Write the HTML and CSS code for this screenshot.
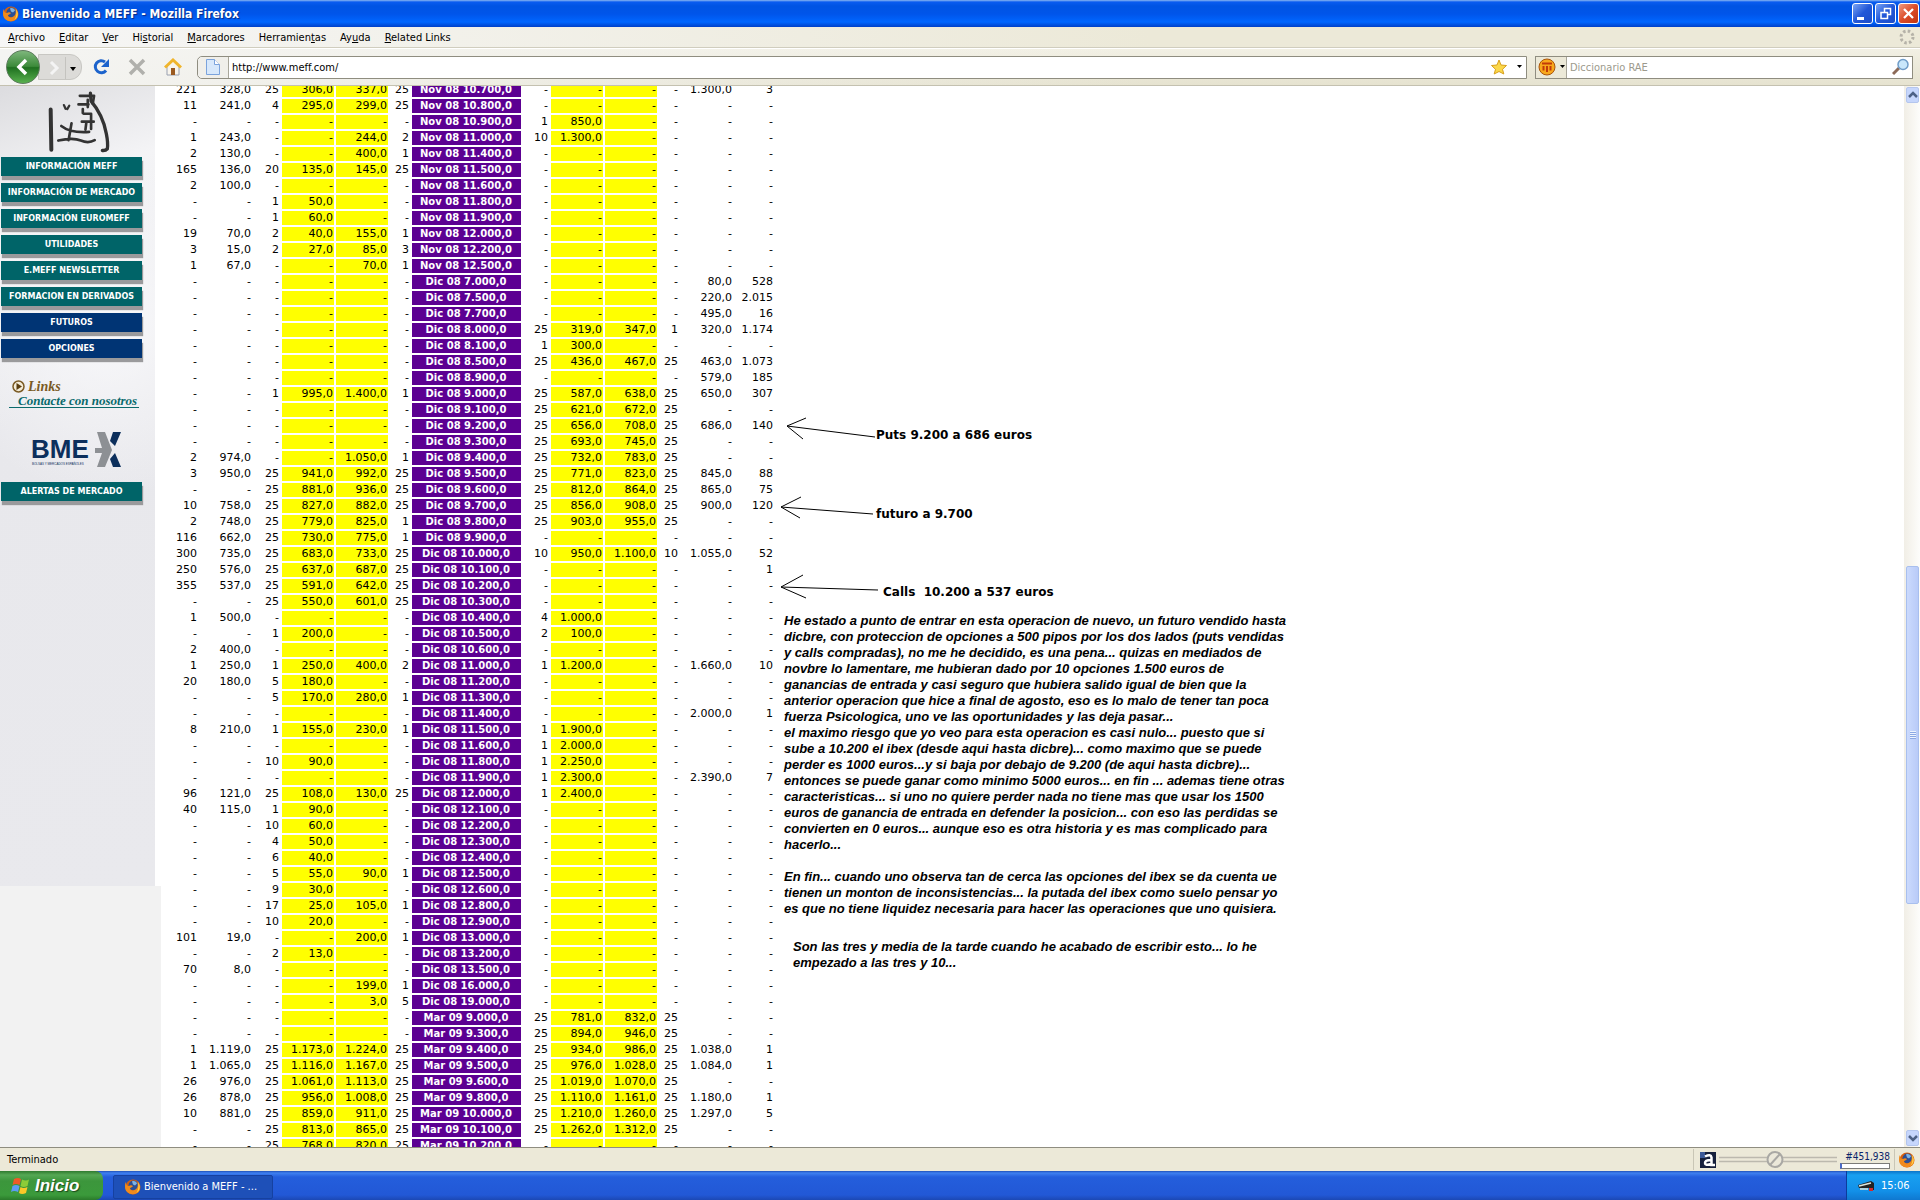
FILE: index.html
```html
<!DOCTYPE html>
<html lang="es">
<head>
    <meta charset="utf-8">
    <meta name="viewport" content="width=device-width, initial-scale=1.0">
    <title>Bienvenido a MEFF</title>
    <link rel="stylesheet" href="styles.css">
</head>
<body>
    <!-- shared icons -->
    <svg class="defs" width="0" height="0">
        <symbol id="firefox" viewBox="0 0 16 16">
            <circle cx="8" cy="8" r="7.500" fill="#d9600c"/>
            <circle cx="8.500" cy="6.500" r="5" fill="#2a4f96"/>
            <path d="M7 2.500c2-1 4.500 0 5 2l-2 2-2-1z" fill="#7fb4e4"/>
            <path d="M1 3c0 3 1 4 3 4 1-1 3-1 4 0-1 2-3 1-3 3 1 2 5 2 7-1 1-2 1-4 0-6 4 3 4 9 0 11-5 3-12 0-12-6 0-2 0-4 1-5z" fill="#f08a1c"/>
            <path d="M13 3c3 4 2 9-2 11 2-2 3-6 2-11z" fill="#ffd24a"/>
        </symbol>
    </svg>

    <div class="titlebar">
        <svg class="ico" width="16" height="16"><use href="#firefox"/></svg>
        <span class="title">Bienvenido a MEFF - Mozilla Firefox</span>
        <div class="window-buttons">
            <button class="win" aria-label="Minimizar"><svg width="20" height="20"><path d="M4 13h7v3H4z" fill="#fff"/></svg></button>
            <button class="win" aria-label="Restaurar"><svg width="20" height="20"><path d="M8.500 8V4.500h6v6H12M5 8.500h6.500v6H5z" fill="none" stroke="#fff" stroke-width="1.500"/></svg></button>
            <button class="win close" aria-label="Cerrar"><svg width="20" height="20"><path d="M5 5l9 9M14 5l-9 9" stroke="#fff" stroke-width="2.300"/></svg></button>
        </div>
    </div>

    <div class="menubar">
        <a href="#"><u>A</u>rchivo</a>
        <a href="#"><u>E</u>ditar</a>
        <a href="#"><u>V</u>er</a>
        <a href="#">Hi<u>s</u>torial</a>
        <a href="#"><u>M</u>arcadores</a>
        <a href="#">Herramien<u>t</u>as</a>
        <a href="#">Ay<u>u</u>da</a>
        <a href="#"><u>R</u>elated Links</a>
        <svg class="throbber" width="16" height="16"><circle cx="8" cy="8" r="6" fill="none" stroke="#b5b2a8" stroke-width="3" stroke-dasharray="2.500 2.210"/></svg>
    </div>

    <div class="toolbar">
        <div class="nav">
            <button class="back" aria-label="Atrás"><svg width="32" height="32"><path d="M19 9l-7 7 7 7" fill="none" stroke="#fff" stroke-width="3.500"/></svg></button>
            <button class="forward" aria-label="Adelante"><svg width="42" height="26"><path d="M12 7l6 6-6 6" fill="none" stroke="#f4f4f4" stroke-width="3"/><path d="M26.500 2v22" stroke="#c4c3bf"/><path d="M31 12h6l-3 4z" fill="#000"/></svg></button>
        </div>
        <button class="tool" aria-label="Recargar"><svg width="18" height="18"><path d="M14 12.500A6 6 0 1 1 13 4" fill="none" stroke="#1c63cc" stroke-width="3"/><path d="M17 1v8H9z" fill="#1c63cc"/></svg></button>
        <button class="tool" aria-label="Detener"><svg width="18" height="18"><path d="M2 2l14 14M16 2L2 16" stroke="#b0b0ac" stroke-width="3.500"/></svg></button>
        <button class="tool" aria-label="Inicio"><svg width="18" height="18"><path d="M3 8v9h12V8L9 3z" fill="#f8f4ec" stroke="#98a0b0"/><path d="M7 10h4v7H7z" fill="#9a5a20"/><path d="M1 9.500L9 2l8 7.500" fill="none" stroke="#f0b52c" stroke-width="3"/></svg></button>
        <div class="urlbox">
            <span class="identity"><svg width="14" height="18"><path d="M.5 1.500h8l5 5v10H.5z" fill="#d7e8fb" stroke="#7ba3dc"/><path d="M8.500 1.500v5h5" fill="#fff" stroke="#7ba3dc"/></svg></span>
            <input type="text" aria-label="Dirección" value="http://www.meff.com/">
            <svg width="16" height="16"><path d="M8 1l2 5 5.500.5-4 3.800L12.800 15 8 12.500 3.200 15l1.300-4.700-4-3.800L6 6z" fill="#fbd84a" stroke="#d79f1c"/></svg>
            <svg class="caret" width="6" height="4"><path d="M0 0h5L2.500 3z"/></svg>
        </div>
        <div class="searchbox">
            <span class="engine">
                <svg width="18" height="18"><circle cx="9" cy="9" r="8" fill="#f8a81c" stroke="#a8530c"/><path d="M4 5.500h10M5.500 8v4.500M9 8v6M12.500 8v4.500" stroke="#c23a08" stroke-width="2"/></svg>
                <svg width="6" height="4"><path d="M0 0h5L2.500 3z"/></svg>
            </span>
            <input type="text" aria-label="Buscar" placeholder="Diccionario RAE">
            <svg width="18" height="18"><path d="M1 16l6-6" stroke="#8c6a58" stroke-width="3"/><circle cx="11" cy="6.500" r="5" fill="#c9e7fb" stroke="#6f9cc8" stroke-width="1.500"/></svg>
        </div>
    </div>

    <div class="viewport">
        <div class="sidebar">
            <svg class="logo" viewBox="0 15 465 213">
                <g fill="none" stroke="#333" stroke-width="10" stroke-linecap="round" stroke-linejoin="round">
                    <path d="M150 85l2 122" stroke-width="12"/>
                    <path d="M190 72l5 11M200 84l6-10" stroke-width="7"/>
                    <path d="M238 44h43l-4 24" stroke-width="8"/>
                    <path d="M270 36l2 24q36 42 46 98 6 30 3 46-5 6-15 5"/>
                    <path d="M234 70h30M262 56v22M247 84v12M250 98h22v46M244 122h36M258 122l-3 24" stroke-width="8"/>
                    <path d="M182 135q28 22 84 18M213 127l-9 51M173 179q45-10 68 0t42-1" stroke-width="8"/>
                </g>
            </svg>
            <div class="nav-links">
                <a class="btn" href="#">INFORMACIÓN MEFF</a>
                <a class="btn" href="#">INFORMACIÓN DE MERCADO</a>
                <a class="btn" href="#">INFORMACIÓN EUROMEFF</a>
                <a class="btn" href="#">UTILIDADES</a>
                <a class="btn" href="#">E.MEFF NEWSLETTER</a>
                <a class="btn" href="#">FORMACION EN DERIVADOS</a>
                <a class="btn blue" href="#">FUTUROS</a>
                <a class="btn blue" href="#">OPCIONES</a>
            </div>
            <div class="contact">
                <a class="links" href="#"><svg width="13" height="13"><circle cx="6.500" cy="6.500" r="5.500" fill="#f4ecd8" stroke="#7a5a24" stroke-width="1.500"/><path d="M4.500 3v7l5.500-3.500z" fill="#5a3e10"/></svg>Links</a>
                <a class="nosotros" href="#">Contacte con nosotros</a>
            </div>
            <svg class="bme" viewBox="0 0 90 36">
                <text class="brand" x="0" y="26">BME</text>
                <path d="M66 0h8l7 18-7 17h-8l5-14h-7v-5h7z" fill="#8d9094"/>
                <path d="M82 0h8l-6 14-5-5zM84 21l6 14h-8l-3-8z" fill="#0c2f5c"/>
                <text x="1" y="33">BOLSAS Y MERCADOS ESPAÑOLES</text>
            </svg>
            <a class="btn" href="#">ALERTAS DE MERCADO</a>
        </div>
        <div class="sidebar-end"></div>

        <table class="prices">
            <colgroup>
                <col class="w-vol"><col class="w-price"><col class="w-wide"><col class="w-price"><col class="w-price"><col class="w-size">
                <col class="w-name">
                <col class="w-wide"><col class="w-price"><col class="w-price"><col class="w-size"><col class="w-price"><col class="w-last">
            </colgroup>
            <tbody id="rows"></tbody>
        </table>

        <div class="notes">
            <div class="arrow-note first">
                <svg width="96" height="26"><path d="M7 9l88 11M26 1L7 9l16 13"/></svg>
                <strong>Puts 9.200 a 686 euros</strong>
            </div>
            <div class="arrow-note second">
                <svg width="96" height="26"><path d="M1 11l92 7M21 1L1 11l19 11"/></svg>
                <strong>futuro a 9.700</strong>
            </div>
            <div class="arrow-note third">
                <svg width="103" height="26"><path d="M1 13l97 3M23 1L1 13l25 11"/></svg>
                <strong>Calls  10.200 a 537 euros</strong>
            </div>
            <p>He estado a punto de entrar en esta operacion de nuevo, un futuro vendido hasta<br>
            dicbre, con proteccion de opciones a 500 pipos por los dos lados (puts vendidas<br>
            y calls compradas), no me he decidido, es una pena... quizas en mediados de<br>
            novbre lo lamentare, me hubieran dado por 10 opciones 1.500 euros de<br>
            ganancias de entrada y casi seguro que hubiera salido igual de bien que la<br>
            anterior operacion que hice a final de agosto, eso es lo malo de tener tan poca<br>
            fuerza Psicologica, uno ve las oportunidades y las deja pasar...<br>
            el maximo riesgo que yo veo para esta operacion es casi nulo... puesto que si<br>
            sube a 10.200 el ibex (desde aqui hasta dicbre)... como maximo que se puede<br>
            perder es 1000 euros...y si baja por debajo de 9.200 (de aqui hasta dicbre)...<br>
            entonces se puede ganar como minimo 5000 euros... en fin ... ademas tiene otras<br>
            caracteristicas... si uno no quiere perder nada no tiene mas que usar los 1500<br>
            euros de ganancia de entrada en defender la posicion... con eso las perdidas se<br>
            convierten en 0 euros... aunque eso es otra historia y es mas complicado para<br>
            hacerlo...</p>
            <p>En fin... cuando uno observa tan de cerca las opciones del ibex se da cuenta ue<br>
            tienen un monton de inconsistencias... la putada del ibex como suelo pensar yo<br>
            es que no tiene liquidez necesaria para hacer las operaciones que uno quisiera.</p>
            <p class="last">Son las tres y media de la tarde cuando he acabado de escribir esto... lo he<br>
            empezado a las tres y 10...</p>
        </div>

        <div class="scrollbar">
            <button class="up" aria-label="Subir"><svg width="10" height="8"><path d="M1 6l4-4 4 4" fill="none" stroke="#4d6185" stroke-width="2.500"/></svg></button>
            <div class="track before"></div>
            <div class="thumb"><i></i></div>
            <div class="track after"></div>
            <button class="down" aria-label="Bajar"><svg width="10" height="8"><path d="M1 2l4 4 4-4" fill="none" stroke="#4d6185" stroke-width="2.500"/></svg></button>
        </div>
    </div>

    <div class="statusbar">
        <span class="status-text">Terminado</span>
        <div class="panel slider">
            <svg width="16" height="16"><path d="M0 0h16v16H0z" fill="#16203c"/><path d="M0 0h5v6H0z" fill="#3c5a98"/><path d="M5 4.500q6-3 6.500 1V13H15M11 8q-6 0-6 3t6 1" fill="none" stroke="#fff" stroke-width="2.500"/></svg>
            <svg width="122" height="18"><path d="M2 6.500h118M2 10.500h118" stroke="#bcb9ae" stroke-width="1.500"/><circle cx="58" cy="8.500" r="7.500" fill="#ebe8da" stroke="#a9a8a4" stroke-width="2"/><path d="M53 14L63 3" stroke="#a9a8a4" stroke-width="2"/></svg>
            <div class="rank"><a href="#">#451,938</a><div class="meter"></div></div>
        </div>
        <div class="panel"><svg width="16" height="16"><use href="#firefox"/></svg></div>
    </div>

    <div class="taskbar">
        <button class="start">
            <svg width="20" height="20"><path d="M3 3q4-2 7 0L8.500 9Q5 7 1.500 9z" fill="#ee5a28"/><path d="M11 3.500q4 2 7 0L16.500 10q-4 2-7 0z" fill="#8ccc38"/><path d="M1.500 10q3-2 7 0L7 16q-4-2-7 0z" fill="#5c9cf4"/><path d="M9.500 11q3 2 7 0L15 17q-4 2-7 0z" fill="#fbc828"/></svg>
            Inicio
        </button>
        <button class="task"><svg width="16" height="16"><use href="#firefox"/></svg>Bienvenido a MEFF - ...</button>
        <div class="tray">
            <svg width="18" height="12"><path d="M1 5l13-4 3 2v7h-4l-1-2H2z" fill="#222"/><path d="M2 6l12-3M3 9h8" stroke="#dfe6dc" stroke-width="1.500"/><path d="M12 8h4v3h-4z" fill="#d42a2a"/></svg>
            <span>15:06</span>
        </div>
    </div>

    <script>
        // calls | strike | puts, an empty side means no quotes
        var rows = [
            "221 328,0 25 306,0 337,0 25|Nov 08 10.700,0|- - - - 1.300,0 3",
            "11 241,0 4 295,0 299,0 25|Nov 08 10.800,0|",
            "|Nov 08 10.900,0|1 850,0 - - - -",
            "1 243,0 - - 244,0 2|Nov 08 11.000,0|10 1.300,0 - - - -",
            "2 130,0 - - 400,0 1|Nov 08 11.400,0|",
            "165 136,0 20 135,0 145,0 25|Nov 08 11.500,0|",
            "2 100,0 - - - -|Nov 08 11.600,0|",
            "- - 1 50,0 - -|Nov 08 11.800,0|",
            "- - 1 60,0 - -|Nov 08 11.900,0|",
            "19 70,0 2 40,0 155,0 1|Nov 08 12.000,0|",
            "3 15,0 2 27,0 85,0 3|Nov 08 12.200,0|",
            "1 67,0 - - 70,0 1|Nov 08 12.500,0|",
            "|Dic 08 7.000,0|- - - - 80,0 528",
            "|Dic 08 7.500,0|- - - - 220,0 2.015",
            "|Dic 08 7.700,0|- - - - 495,0 16",
            "|Dic 08 8.000,0|25 319,0 347,0 1 320,0 1.174",
            "|Dic 08 8.100,0|1 300,0 - - - -",
            "|Dic 08 8.500,0|25 436,0 467,0 25 463,0 1.073",
            "|Dic 08 8.900,0|- - - - 579,0 185",
            "- - 1 995,0 1.400,0 1|Dic 08 9.000,0|25 587,0 638,0 25 650,0 307",
            "|Dic 08 9.100,0|25 621,0 672,0 25 - -",
            "|Dic 08 9.200,0|25 656,0 708,0 25 686,0 140",
            "|Dic 08 9.300,0|25 693,0 745,0 25 - -",
            "2 974,0 - - 1.050,0 1|Dic 08 9.400,0|25 732,0 783,0 25 - -",
            "3 950,0 25 941,0 992,0 25|Dic 08 9.500,0|25 771,0 823,0 25 845,0 88",
            "- - 25 881,0 936,0 25|Dic 08 9.600,0|25 812,0 864,0 25 865,0 75",
            "10 758,0 25 827,0 882,0 25|Dic 08 9.700,0|25 856,0 908,0 25 900,0 120",
            "2 748,0 25 779,0 825,0 1|Dic 08 9.800,0|25 903,0 955,0 25 - -",
            "116 662,0 25 730,0 775,0 1|Dic 08 9.900,0|",
            "300 735,0 25 683,0 733,0 25|Dic 08 10.000,0|10 950,0 1.100,0 10 1.055,0 52",
            "250 576,0 25 637,0 687,0 25|Dic 08 10.100,0|- - - - - 1",
            "355 537,0 25 591,0 642,0 25|Dic 08 10.200,0|",
            "- - 25 550,0 601,0 25|Dic 08 10.300,0|",
            "1 500,0 - - - -|Dic 08 10.400,0|4 1.000,0 - - - -",
            "- - 1 200,0 - -|Dic 08 10.500,0|2 100,0 - - - -",
            "2 400,0 - - - -|Dic 08 10.600,0|",
            "1 250,0 1 250,0 400,0 2|Dic 08 11.000,0|1 1.200,0 - - 1.660,0 10",
            "20 180,0 5 180,0 - -|Dic 08 11.200,0|",
            "- - 5 170,0 280,0 1|Dic 08 11.300,0|",
            "|Dic 08 11.400,0|- - - - 2.000,0 1",
            "8 210,0 1 155,0 230,0 1|Dic 08 11.500,0|1 1.900,0 - - - -",
            "|Dic 08 11.600,0|1 2.000,0 - - - -",
            "- - 10 90,0 - -|Dic 08 11.800,0|1 2.250,0 - - - -",
            "|Dic 08 11.900,0|1 2.300,0 - - 2.390,0 7",
            "96 121,0 25 108,0 130,0 25|Dic 08 12.000,0|1 2.400,0 - - - -",
            "40 115,0 1 90,0 - -|Dic 08 12.100,0|",
            "- - 10 60,0 - -|Dic 08 12.200,0|",
            "- - 4 50,0 - -|Dic 08 12.300,0|",
            "- - 6 40,0 - -|Dic 08 12.400,0|",
            "- - 5 55,0 90,0 1|Dic 08 12.500,0|",
            "- - 9 30,0 - -|Dic 08 12.600,0|",
            "- - 17 25,0 105,0 1|Dic 08 12.800,0|",
            "- - 10 20,0 - -|Dic 08 12.900,0|",
            "101 19,0 - - 200,0 1|Dic 08 13.000,0|",
            "- - 2 13,0 - -|Dic 08 13.200,0|",
            "70 8,0 - - - -|Dic 08 13.500,0|",
            "- - - - 199,0 1|Dic 08 16.000,0|",
            "- - - - 3,0 5|Dic 08 19.000,0|",
            "|Mar 09 9.000,0|25 781,0 832,0 25 - -",
            "|Mar 09 9.300,0|25 894,0 946,0 25 - -",
            "1 1.119,0 25 1.173,0 1.224,0 25|Mar 09 9.400,0|25 934,0 986,0 25 1.038,0 1",
            "1 1.065,0 25 1.116,0 1.167,0 25|Mar 09 9.500,0|25 976,0 1.028,0 25 1.084,0 1",
            "26 976,0 25 1.061,0 1.113,0 25|Mar 09 9.600,0|25 1.019,0 1.070,0 25 - -",
            "26 878,0 25 956,0 1.008,0 25|Mar 09 9.800,0|25 1.110,0 1.161,0 25 1.180,0 1",
            "10 881,0 25 859,0 911,0 25|Mar 09 10.000,0|25 1.210,0 1.260,0 25 1.297,0 5",
            "- - 25 813,0 865,0 25|Mar 09 10.100,0|25 1.262,0 1.312,0 25 - -",
            "- - 25 768,0 820,0 25|Mar 09 10.200,0|"
        ];

        function cells(side, first) {
            return (side || "- - - - - -").split(" ").map(function (v, i) {
                var hot = i === first || i === first + 1;
                return '<td' + (hot ? ' class="hot"' : '') + '>' + v + '</td>';
            }).join("");
        }

        document.getElementById("rows").innerHTML = rows.map(function (r) {
            var p = r.split("|");
            return '<tr>' + cells(p[0], 3) + '<th>' + p[1] + '</th>' + cells(p[2], 1) + '</tr>';
        }).join("");
    </script>
</body>
</html>
```

FILE: styles.css
```css
* {
    box-sizing: border-box;
}

body {
    margin: 0;
    height: 100vh;
    display: flex;
    flex-direction: column;
    overflow: hidden;
    background-color: #ece9d8;
    color: #000;
    font-family: "DejaVu Sans Condensed", "DejaVu Sans", sans-serif;
    font-size: 11px;
}

a {
    color: inherit;
    text-decoration: none;
}

button {
    padding: 0;
    border: 0;
    background: none;
    font: inherit;
}

input {
    flex: 1;
    min-width: 0;
    padding: 0;
    border: 0;
    outline: 0;
    background: none;
    font: inherit;
}

svg {
    display: block;
    flex-shrink: 0;
}

.defs {
    position: absolute;
}

/* Title bar */
.titlebar {
    display: flex;
    align-items: center;
    flex-shrink: 0;
    height: 27px;
    padding: 0 1px 0 3px;
    background: linear-gradient(#8cb8f0 0, #0a5cf0 2px, #0054e3 6px, #0055ea 14px, #0066ff 22px, #0040c8 27px);
}

.title {
    flex: 1;
    margin-left: 3px;
    padding-top: 1px;
    color: #fff;
    font-size: 12px;
    font-weight: bold;
    text-shadow: 1px 1px 1px #0a2a80;
}

.window-buttons {
    display: flex;
    gap: 2px;
}

.win {
    width: 21px;
    height: 21px;
    border: 1px solid #fff;
    border-radius: 3px;
    background: linear-gradient(135deg, #7aa4f4, #2358d8 50%, #1c4cc8);
}

.win.close {
    background: linear-gradient(135deg, #ee9a80, #dc4c28 50%, #c03410);
}

/* Menu bar */
.menubar {
    display: flex;
    align-items: center;
    gap: 14px;
    flex-shrink: 0;
    height: 21px;
    padding: 0 5px 0 8px;
    background: linear-gradient(90deg, #f6f6f6, #ece9d8 60%);
    border-bottom: 1px solid #d0cdbe;
}

.throbber {
    margin-left: auto;
}

/* Toolbar */
.toolbar {
    display: flex;
    align-items: center;
    flex-shrink: 0;
    height: 38px;
    padding: 0 7px 0 6px;
    background: linear-gradient(90deg, #f4f4f2, rgba(236, 233, 216, 0) 60%), linear-gradient(#f2f0e4, #e6e3d0);
    border-top: 1px solid #fff;
    border-bottom: 1px solid #c4c1b0;
}

.nav {
    display: flex;
    align-items: center;
    margin-right: 10px;
}

.back {
    width: 34px;
    height: 34px;
    border: 1px solid #5b7a5b;
    border-radius: 50%;
    background: linear-gradient(#7eb77c, #3c8a3a 48%, #1f7020 52%, #58b04e);
    z-index: 1;
}

.forward {
    margin-left: -2px;
    height: 26px;
    border: 1px solid #c8c7c3;
    border-radius: 0 12px 12px 0;
    background-color: #dcdbd8;
}

.tool {
    width: 20px;
    margin-right: 16px;
}

.tool + .urlbox {
    margin-left: -3px;
}

.urlbox,
.searchbox {
    display: flex;
    align-items: center;
    height: 23px;
    border: 1px solid #8f8d80;
    background-color: #fff;
}

.urlbox {
    flex: 1;
    padding-right: 3px;
    border-radius: 5px 0 0 5px;
}

.urlbox input {
    margin-left: 3px;
}

.identity {
    display: flex;
    align-items: center;
    justify-content: center;
    width: 31px;
    height: 21px;
    border-right: 1px solid #a8a69a;
    border-radius: 5px 0 0 5px;
    background-color: #f0efea;
}

.caret {
    margin-left: 10px;
}

.searchbox {
    width: 378px;
    margin-left: 8px;
    padding-right: 2px;
}

.engine {
    display: flex;
    align-items: center;
    gap: 4px;
    height: 21px;
    width: 31px;
    padding-left: 2px;
    border-right: 1px solid #a8a69a;
    background-color: #ece9d8;
}

.searchbox input {
    margin-left: 3px;
}

.searchbox input::placeholder {
    color: #9c9a8c;
    opacity: 1;
}

/* Page */
.viewport {
    position: relative;
    display: flex;
    flex: 1;
    align-items: flex-start;
    min-height: 0;
    overflow: hidden;
    background-color: #fff;
}

.sidebar {
    position: relative;
    z-index: 1;
    flex-shrink: 0;
    width: 155px;
    height: 800px;
    padding-left: 1px;
    background: radial-gradient(circle at 70% 30%, #f8f8fa 0, rgba(240, 240, 244, 0) 30%), linear-gradient(160deg, #dcdcdf 0, #f4f4f6 14%, #e8e8ec 40%, #e9e9ed 100%);
}

.sidebar-end {
    position: absolute;
    top: 800px;
    bottom: 0;
    left: 0;
    width: 161px;
    background-color: #f2f2f2;
}

.logo {
    width: 154px;
    height: 71px;
}

.nav-links {
    display: flex;
    flex-direction: column;
    gap: 7px;
}

.btn {
    display: block;
    width: 141px;
    height: 19px;
    background-color: #006468;
    box-shadow: 1px 4px 1px #9a9a9c;
    color: #fff;
    font-size: 8px;
    font-weight: bold;
    line-height: 20px;
    text-align: center;
    white-space: nowrap;
}

.nav-links,
.btn {
    font-family: "DejaVu Sans", sans-serif;
}

.btn.blue {
    background-color: #003474;
}

.contact {
    display: flex;
    flex-direction: column;
    margin: 22px 0 0 8px;
    width: 130px;
    height: 30px;
    font-family: "Liberation Serif", serif;
    font-style: italic;
    font-weight: bold;
}

.links {
    display: flex;
    gap: 3px;
    color: #7a5a24;
    font-size: 14px;
    line-height: 14px;
}

.links svg {
    margin-left: 3px;
}

.nosotros {
    padding-left: 9px;
    border-bottom: 1px solid #0a6a6c;
    color: #0a6a6c;
    font-size: 13px;
    line-height: 13px;
    white-space: nowrap;
}

.bme {
    width: 90px;
    height: 36px;
    margin: 22px 0 14px 30px;
}

.bme text {
    fill: #0c2f5c;
    font-family: "Liberation Sans", sans-serif;
    font-size: 3px;
}

.bme .brand {
    font-size: 26px;
    font-weight: bold;
}

/* Price table */
.prices {
    flex-shrink: 0;
    width: 615px;
    margin: -5px 0 0 6px;
    border-spacing: 2px;
    table-layout: fixed;
    font-family: "DejaVu Sans", sans-serif;
}

.w-vol {
    width: 35px;
}

.w-price {
    width: 52px;
}

.w-wide {
    width: 26px;
}

.w-size {
    width: 20px;
}

.w-name {
    width: 109px;
}

.w-last {
    width: 39px;
}

.prices td,
.prices th {
    height: 14px;
    padding: 0 1px 0 0;
    line-height: 14px;
    white-space: nowrap;
}

.prices td {
    text-align: right;
    font-size: 11px;
}

.prices th {
    background-color: #5c0092;
    color: #fff;
    font-size: 10px;
    text-align: center;
}

.prices .hot {
    background-color: #ff0;
}

/* Notes beside the table */
.notes {
    flex: 1;
    min-width: 0;
    padding-top: 331px;
    margin-left: 4px;
}

.arrow-note {
    display: flex;
    align-items: center;
    height: 26px;
    font-family: "DejaVu Sans", sans-serif;
    font-size: 12px;
    white-space: pre;
}

.arrow-note path {
    fill: none;
    stroke: #000;
}

.arrow-note strong {
    padding-top: 10px;
}

.second {
    margin-top: 53px;
}

.third {
    margin-top: 52px;
}

.notes p {
    margin: 13px 0 0 4px;
    font-family: "Liberation Sans", Arial, sans-serif;
    font-size: 13px;
    font-style: italic;
    font-weight: bold;
    line-height: 16px;
    white-space: nowrap;
}

.notes p + p {
    margin-top: 16px;
}

.notes p.last {
    margin: 22px 0 0 13px;
}

/* Scrollbar */
.scrollbar {
    display: flex;
    flex-direction: column;
    align-self: stretch;
    width: 16px;
    padding: 1px 1px 1px 2px;
    background: linear-gradient(90deg, #f1eee6, #fdfdfb);
}

.scrollbar button {
    display: flex;
    align-items: center;
    justify-content: center;
    height: 16px;
    border: 1px solid #b4c6ee;
    border-radius: 2px;
    background-color: #c6d6fc;
}

.before {
    flex: 464;
}

.after {
    flex: 226;
}

.thumb {
    flex: 337;
    display: flex;
    align-items: center;
    justify-content: center;
    border: 1px solid #a8bfee;
    border-radius: 2px;
    background: linear-gradient(90deg, #cbdafd, #b9cbf8);
}

.thumb i {
    width: 6px;
    height: 8px;
    background: repeating-linear-gradient(#eef4fe 0, #eef4fe 1px, #8ca8e4 1px, #8ca8e4 2px);
}

/* Status bar */
.statusbar {
    display: flex;
    align-items: center;
    flex-shrink: 0;
    height: 24px;
    border-top: 1px solid #8f8d80;
    background-color: #ece9d8;
}

.status-text {
    flex: 1;
    padding-left: 7px;
}

.panel {
    display: flex;
    align-items: center;
    height: 21px;
    padding: 0 5px 0 4px;
    border-left: 1px solid #c9c6b6;
}

.slider {
    gap: 1px;
    padding-left: 6px;
}

.panel.slider {
    padding-right: 4px;
}

.rank {
    width: 50px;
    color: #0a246a;
    font-size: 10px;
    line-height: 12px;
    text-align: right;
}

.meter {
    height: 6px;
    border: 1px solid #7b7b78;
    border-left: 2px solid #4a6ac8;
    background-color: #fff;
}

/* Taskbar */
.taskbar {
    display: flex;
    align-items: center;
    flex-shrink: 0;
    height: 29px;
    background: linear-gradient(#1f50b8 0, #3f80f0 2px, #245edc 6px, #2258d6 24px, #1c48b4);
    color: #fff;
}

.start {
    display: flex;
    align-items: center;
    gap: 4px;
    width: 103px;
    height: 29px;
    padding-left: 11px;
    border-radius: 0 8px 8px 0;
    background: linear-gradient(#2f7a2f, #55a854 4px, #3c963c 10px, #3b9a3b 24px, #2a7a2a);
    color: #fff;
    font-family: "Liberation Sans", Arial, sans-serif;
    font-size: 17px;
    font-style: italic;
    font-weight: bold;
    text-shadow: 1px 1px 1px #1c4a1c;
}

.task {
    display: flex;
    align-items: center;
    gap: 3px;
    width: 160px;
    height: 24px;
    margin: 2px 0 0 10px;
    padding-left: 11px;
    border: 1px solid #1641a0;
    border-radius: 2px;
    background-color: #1e50b8;
    color: #fff;
}

.tray {
    display: flex;
    align-items: center;
    gap: 6px;
    width: 74px;
    height: 29px;
    margin-left: auto;
    padding-left: 10px;
    border-left: 1px solid #0c3c9c;
    background: linear-gradient(#0c74c8, #18a0f0 4px, #1290e8 20px, #0f78d0);
}
```
